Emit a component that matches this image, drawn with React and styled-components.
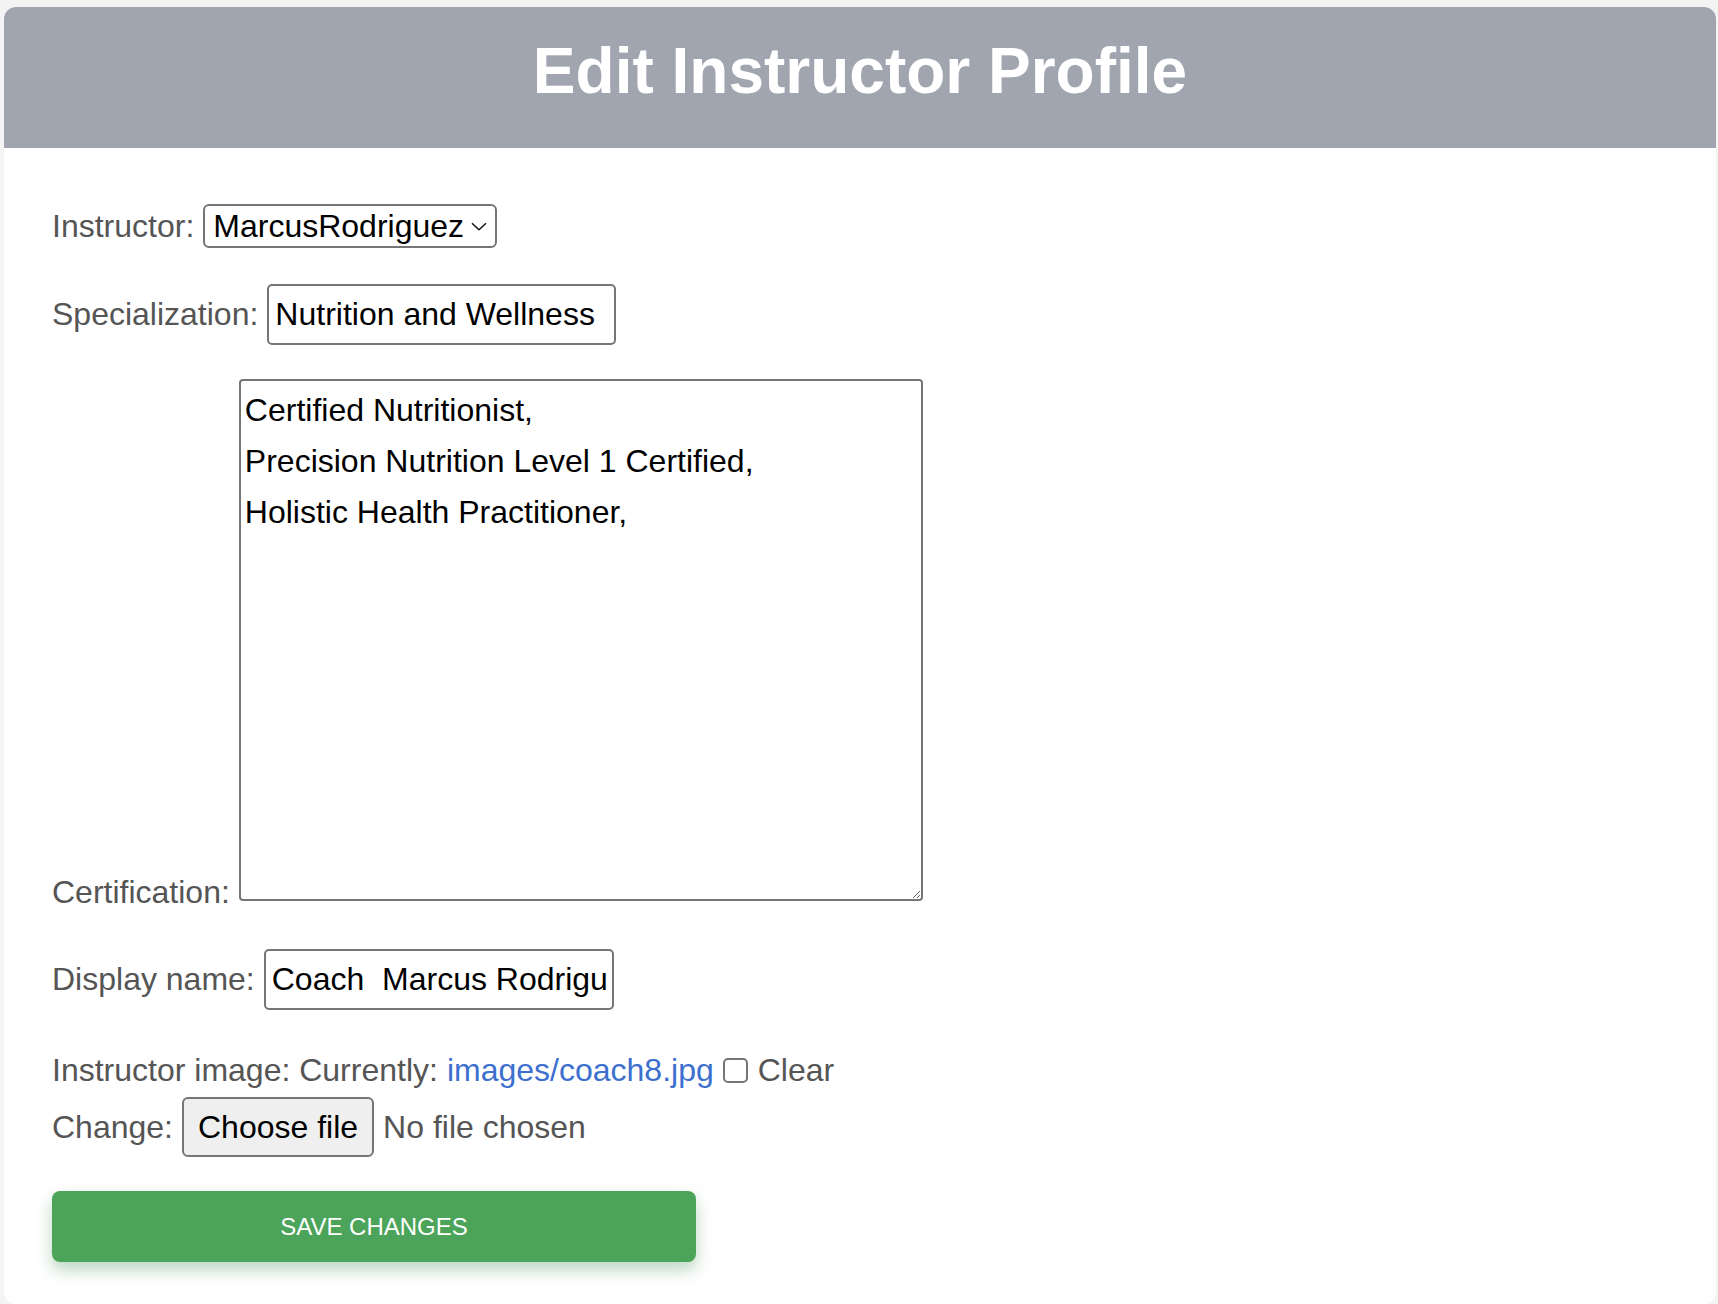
import React, { useState } from 'react';
import styled, { createGlobalStyle } from 'styled-components';

const GlobalStyle = createGlobalStyle`
    html, body {
        margin: 0;
        padding: 0;
        background: #f4f4f4;
    }
    body {
        font-family: "Liberation Sans", Arial, Helvetica, sans-serif;
    }
    `;

const font = `"Liberation Sans", Arial, Helvetica, sans-serif`;

const StyledCard = styled.div`
    margin: 7px 2px 0 4px;
    background: #fff;
    border-radius: 12px;
    overflow: hidden;
    `;

const StyledHeader = styled.header`
    box-sizing: border-box;
    height: 141px;
    padding-top: 27px;
    background: #a0a5b0;
    `;

const StyledTitle = styled.h1`
    margin: 0;
    text-align: center;
    color: #fff;
    font-size: 64px;
    font-weight: 700;
    line-height: 74px;
    `;

const StyledForm = styled.form`
    display: flex;
    flex-direction: column;
    align-items: flex-start;
    padding: 56px 0 42px 48px;
    `;

const StyledRow = styled.div`
    display: flex;
    align-items: ${(p) => (p.$bottom ? 'flex-end' : 'center')};
    gap: ${(p) => p.$gap || 9}px;
    margin-top: ${(p) => p.$mt || 0}px;
    font-size: 32px;
    color: #555;
    `;

const StyledLabel = styled.label`
    font-size: 32px;
    color: #555;
    margin-bottom: ${(p) => (p.$drop ? -10 : 0)}px;
    `;

const StyledSelectShell = styled.div`
    box-sizing: border-box;
    width: 294px;
    height: 44px;
    display: flex;
    align-items: center;
    gap: 6px;
    padding: 0 8px 0 8px;
    border: 2px solid #767676;
    border-radius: 6px;
    background: #fff;
    `;

const StyledSelect = styled.select`
    appearance: none;
    -webkit-appearance: none;
    flex: none;
    width: 252px;
    margin: 0;
    padding: 0;
    border: none;
    outline: none;
    background: transparent;
    font: 32px ${font};
    color: #000;
    `;

const StyledInput = styled.input`
    box-sizing: border-box;
    width: ${(p) => p.$w || 350}px;
    height: 61px;
    margin: 0;
    padding: 0 4px 0 6px;
    border: 2px solid #767676;
    border-radius: 5px;
    background: #fff;
    font: 32px ${font};
    color: #000;
    `;

const StyledArea = styled.textarea`
    box-sizing: border-box;
    width: 684px;
    height: 522px;
    margin: 0;
    padding: 4px;
    border: 2px solid #767676;
    border-radius: 4px;
    background: #fff;
    font: 32px/51px ${font};
    color: #000;
    resize: both;
    `;

const StyledLink = styled.a`
    color: #3d6fcf;
    text-decoration: none;
    `;

const StyledCheck = styled.input`
    appearance: none;
    -webkit-appearance: none;
    box-sizing: border-box;
    width: 25px;
    height: 25px;
    margin: 0 1px 0 0;
    border: 2px solid #767676;
    border-radius: 5px;
    background: #fff;
    `;

const StyledFileButton = styled.button`
    box-sizing: border-box;
    height: 60px;
    padding: 0 14px;
    border: 2px solid #767676;
    border-radius: 6px;
    background: #efefef;
    font: 32px ${font};
    color: #000;
    `;

const StyledHint = styled.span`
    color: #555;
    `;

const StyledSave = styled.button`
    width: 644px;
    height: 71px;
    margin-top: 34px;
    border: none;
    border-radius: 8px;
    background: #4ca45a;
    color: #fff;
    font: 24px ${font};
    text-transform: uppercase;
    box-shadow: 0 8px 16px rgba(60, 140, 75, 0.35);
    cursor: pointer;
    `;

const Chevron = () => (
    <svg width="16" height="9" viewBox="0 0 16 9">
        <path d="M1 1.2l7 6.6 7-6.6" stroke="#111" strokeWidth="1.5" fill="none" />
    </svg>
);

const certification = 'Certified Nutritionist,\nPrecision Nutrition Level 1 Certified,\nHolistic Health Practitioner,\n';

export default function App() {
    const [instructor, setInstructor] = useState('MarcusRodriguez');
    const [clear, setClear] = useState(false);

    return (
        <>
            <GlobalStyle />
            <StyledCard>
                <StyledHeader>
                    <StyledTitle>Edit Instructor Profile</StyledTitle>
                </StyledHeader>
                <StyledForm onSubmit={(e) => e.preventDefault()}>
                    <StyledRow>
                        <StyledLabel htmlFor="instructor">Instructor:</StyledLabel>
                        <StyledSelectShell>
                            <StyledSelect id="instructor" value={instructor} onChange={(e) => setInstructor(e.target.value)}>
                                <option>MarcusRodriguez</option>
                                <option>SarahJohnson</option>
                                <option>DavidChen</option>
                            </StyledSelect>
                            <Chevron />
                        </StyledSelectShell>
                    </StyledRow>

                    <StyledRow $mt={36}>
                        <StyledLabel htmlFor="spec">Specialization:</StyledLabel>
                        <StyledInput id="spec" $w={349} defaultValue="Nutrition and Wellness" />
                    </StyledRow>

                    <StyledRow $mt={34} $bottom>
                        <StyledLabel htmlFor="cert" $drop>Certification:</StyledLabel>
                        <StyledArea id="cert" defaultValue={certification} />
                    </StyledRow>

                    <StyledRow $mt={48}>
                        <StyledLabel htmlFor="display">Display name:</StyledLabel>
                        <StyledInput id="display" defaultValue="Coach  Marcus Rodriguez" />
                    </StyledRow>

                    <StyledRow $mt={42}>
                        <span>Instructor image: Currently:</span>
                        <StyledLink href="#">images/coach8.jpg</StyledLink>
                        <StyledCheck type="checkbox" checked={clear} onChange={() => setClear(!clear)} />
                        <span>Clear</span>
                    </StyledRow>

                    <StyledRow $mt={8}>
                        <span>Change:</span>
                        <StyledFileButton type="button">Choose file</StyledFileButton>
                        <StyledHint>No file chosen</StyledHint>
                    </StyledRow>

                    <StyledSave type="submit">Save changes</StyledSave>
                </StyledForm>
            </StyledCard>
        </>
    );
}
